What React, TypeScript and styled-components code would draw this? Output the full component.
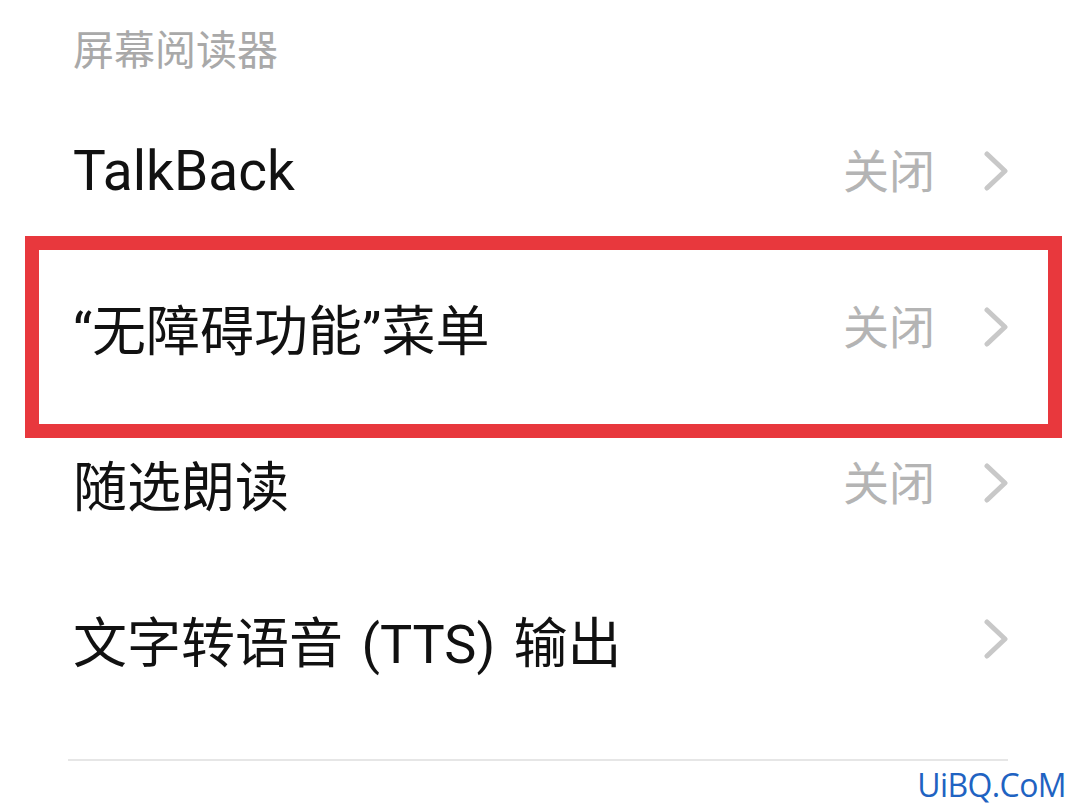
import React from "react";
import styled, { createGlobalStyle } from "styled-components";

const Global = createGlobalStyle`
  html, body { margin: 0; padding: 0; background: #ffffff; }
  body { font-family: Roboto, "Noto Sans CJK SC", sans-serif; }
`;

const Page = styled.div`
  width: 1080px;
  height: 809px;
  background: #ffffff;
  display: flex;
  flex-direction: column;
  overflow: hidden;
`;

const SectionHeader = styled.div`
  height: 97px;
  padding-left: 73px;
  display: flex;
  align-items: center;
  padding-bottom: 4px;
  box-sizing: border-box;
  font-family: Roboto, "Noto Sans CJK SC", sans-serif;
  font-size: 41px;
  color: #a9a9a9;
`;

const List = styled.div`
  display: flex;
  flex-direction: column;
`;

const Row = styled.div`
  position: relative;
  height: 156px;
  box-sizing: border-box;
  padding: 0 72px 8px 73px;
  display: flex;
  align-items: center;
  justify-content: space-between;
`;

const Title = styled.div<{ $latin?: boolean }>`
  font-family: Roboto, "Noto Sans CJK SC", sans-serif;
  font-size: ${(p) => (p.$latin ? "55px" : "54px")};
  color: #111111;
  white-space: nowrap;
  word-spacing: 5px;
`;

const Trailing = styled.div`
  display: flex;
  align-items: center;
  gap: 49px;
`;

const Status = styled.span`
  font-family: "Noto Sans CJK SC", sans-serif;
  font-size: 46px;
  line-height: 46px;
  padding-bottom: 6px;
  color: #b4b4b4;
`;

const Chevron = styled.svg`
  width: 24px;
  height: 40px;
  display: block;
`;

const Highlight = styled.div`
  position: absolute;
  left: 25px;
  right: 18px;
  top: -17px;
  bottom: -29px;
  border: 14px solid #e8383d;
  pointer-events: none;
`;

const Divider = styled.div`
  margin: 38px 72px 0 68px;
  height: 2px;
  background: #e6e6e6;
`;

const Footer = styled.div`
  display: flex;
  justify-content: flex-end;
  padding: 7px 14px 0 0;
`;

const Watermark = styled.span`
  font-family: "Open Sans", "Noto Sans", sans-serif;
  font-size: 32px;
  line-height: 34px;
  color: #1f63c2;
  letter-spacing: -0.6px;
`;

const ChevronIcon = () => (
  <Chevron viewBox="0 0 24 40">
    <path
      d="M3 3 L21 20 L3 37"
      fill="none"
      stroke="#c8c8c8"
      strokeWidth="5"
      strokeLinecap="round"
      strokeLinejoin="round"
    />
  </Chevron>
);

type Item = { title: string; status?: string; latin?: boolean; highlight?: boolean };

const items: Item[] = [
  { title: "TalkBack", status: "关闭", latin: true },
  { title: "“无障碍功能”菜单", status: "关闭", highlight: true },
  { title: "随选朗读", status: "关闭" },
  { title: "文字转语音 (TTS) 输出" },
];

export default function App() {
  return (
    <Page>
      <Global />
      <SectionHeader>屏幕阅读器</SectionHeader>
      <List>
        {items.map((it) => (
          <Row key={it.title}>
            <Title $latin={it.latin}>{it.title}</Title>
            <Trailing>
              {it.status && <Status>{it.status}</Status>}
              <ChevronIcon />
            </Trailing>
            {it.highlight && <Highlight />}
          </Row>
        ))}
      </List>
      <Divider />
      <Footer>
        <Watermark>UiBQ.CoM</Watermark>
      </Footer>
    </Page>
  );
}
